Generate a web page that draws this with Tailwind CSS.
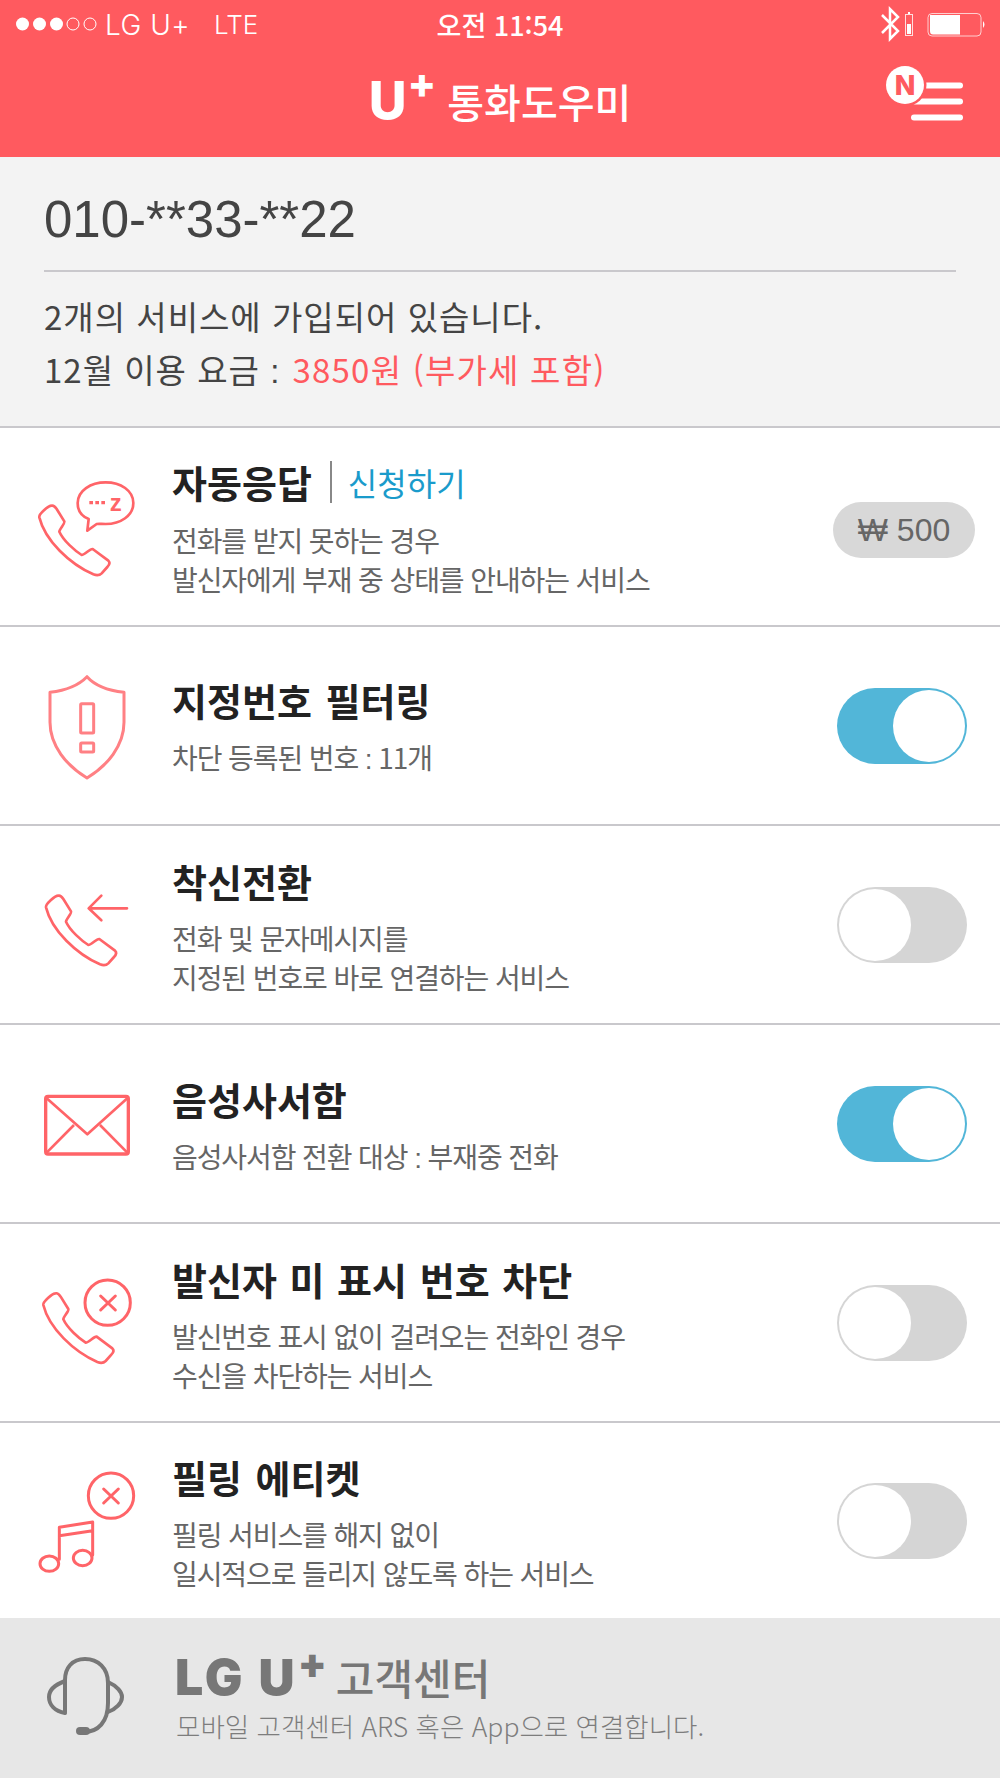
<!DOCTYPE html>
<html lang="ko">
<head>
<meta charset="utf-8">
<script src="https://cdn.jsdelivr.net/npm/@tailwindcss/browser@4"></script>
<title>U+ 통화도우미</title>
</head>
<body class="m-0 bg-white font-['Noto_Sans_CJK_KR','Noto_Sans',sans-serif]">
<svg width="0" height="0" class="absolute"><defs>
<path id="ph" d="M118 265 C116 255 145 230 155 230 C162 228 166 234 170 240 L193 277 C196 283 178 300 178 308 C190 335 225 365 245 378 C255 378 270 358 278 360 L325 395 C332 402 328 408 322 414 L305 433 C298 440 290 440 280 436 C210 405 135 335 118 265 Z"/>
</defs></svg>
<div class="w-[1000px] h-[1778px] overflow-hidden flex flex-col">

<header class="h-[157px] bg-[#ff5a5f] text-white shrink-0 flex flex-col">
  <div class="h-[50px] flex items-center relative">
    <div class="w-[105px] flex items-center shrink-0">
      <svg width="105" height="50" viewBox="0 0 105 50" fill="#fff">
        <circle cx="22.5" cy="24" r="6.5"/><circle cx="39.5" cy="24" r="6.5"/><circle cx="56.5" cy="24" r="6.5"/>
        <circle cx="73" cy="24" r="6" fill="none" stroke="#fff" stroke-width="1"/><circle cx="90" cy="24" r="6" fill="none" stroke="#fff" stroke-width="1"/>
      </svg>
    </div>
    <span class="font-['Inter'] font-light text-[28px] leading-none tracking-[0.5px]">LG U+</span>
    <span class="font-['Inter'] font-light text-[26px] leading-none ml-[24px]">LTE</span>
    <span class="absolute left-0 right-0 text-center text-[27px] leading-[50px] font-medium">오전 11:54</span>
    <svg class="ml-auto relative" width="120" height="50" viewBox="880 0 120 50" fill="none" stroke="#fff">
      <path d="M882 15 L898 31 L890 39 V9 L898 17 L882 33" stroke-width="2.5"/>
      <rect x="905.5" y="14.5" width="7" height="21" stroke-width="1" stroke-opacity=".8"/>
      <rect x="907" y="24" width="4" height="10" fill="#fff" stroke="none"/>
      <rect x="908" y="12" width="2" height="2" fill="#fff" stroke="none"/>
      <rect x="928" y="13.5" width="53" height="22.5" rx="4" stroke-width="1" stroke-opacity=".7"/>
      <path d="M930 15 H960 V34.5 H933 Q930 34.5 930 31 Z" fill="#fff" stroke="none"/>
      <path d="M983 21 Q986 24.500 983 28 Z" fill="#fff" stroke="none"/>
    </svg>
  </div>
  <div class="flex-1 relative flex items-start justify-center pt-[20px]">
    <span class="font-['Inter'] font-extrabold text-[52px] leading-[62px]">U</span>
    <span class="font-['Inter'] font-extrabold text-[42px] leading-[36px] ml-[1px] mr-[11px] -mt-[5px]">+</span>
    <span class="text-[40px] leading-[62px] font-medium">통화도우미</span>
    <svg class="absolute top-0 right-0" width="120" height="107" viewBox="880 50 120 107">
      <g fill="none" stroke="#fff" stroke-width="6" stroke-linecap="round">
        <path d="M915 85.500 H960"/><path d="M915 101.500 H960"/><path d="M914 117.500 H960"/>
      </g>
      <circle cx="905" cy="85" r="21.500" fill="#ff5a5f"/>
      <circle cx="905" cy="85" r="19" fill="#fff"/>
      <text x="905" y="95" text-anchor="middle" font-family="Inter" font-weight="800" font-size="27" fill="#ff5a5f">N</text>
    </svg>
  </div>
</header>

<section class="h-[271px] shrink-0 bg-[#f3f3f3] border-b-2 border-[#c9c8cc] px-[44px] pt-[27px] text-[#444]">
  <div class="h-[88px] border-b-2 border-[#c9c8cc] font-['Liberation_Sans'] text-[51px] leading-[72px]">010-**33-**22</div>
  <p class="mt-[18px] text-[33px] leading-[53px] tracking-[1px]">2개의 서비스에 가입되어 있습니다.</p>
  <p class="text-[33px] leading-[53px] tracking-[1px]">12월 이용 요금 <span class="font-['Liberation_Sans']">:</span> <span class="text-[#ff5a5f] ml-[2px] tracking-[1.2px]">3850원 (부가세 포함)</span></p>
</section>

<main class="flex-1 flex flex-col">
  <article class="h-[199px] shrink-0 flex items-center border-b-2 border-[#c9c8cc]">
    <svg class="w-[172px] h-[197px] shrink-0" viewBox="0 -3 516 591" fill="none" stroke="#ff6468" stroke-width="8" stroke-linejoin="round">
      <use href="#ph"/>
      <path d="M262 305 L266 270 C245 262 233 245 233 222 C233 185 272 160 317 160 C362 160 400 185 400 222 C400 260 362 285 317 285 C305 285 295 284 290 285 Z"/>
      <path d="M268 221 H315" stroke-width="10" stroke-dasharray="11 7"/>
      <text x="347" y="247" text-anchor="middle" font-family="Liberation Sans" font-weight="700" font-size="72" fill="#ff6468" stroke="none">z</text>
    </svg>
    <div class="flex-1 min-w-0 pt-[6px]">
      <div class="flex items-center h-[44px]">
        <h2 class="text-[38px] leading-[44px] font-bold text-[#222]">자동응답</h2>
        <span class="w-[2px] h-[42px] bg-[#888] mx-[18px]"></span>
        <span class="text-[32px] leading-[44px] text-[#1a9bcb] -ml-[2px]">신청하기</span>
      </div>
      <p class="mt-[17px] text-[28px] leading-[39px] text-[#666] tracking-[-1.1px]">전화를 받지 못하는 경우<br>발신자에게 부재 중 상태를 안내하는 서비스</p>
    </div>
    <span class="mr-[25px] mt-[6px] w-[142px] h-[56px] rounded-full bg-[#d8d8d8] flex items-center justify-center font-['Liberation_Sans'] text-[32px] text-[#666]">₩ 500</span>
  </article>

  <article class="h-[199px] shrink-0 flex items-center border-b-2 border-[#c9c8cc]">
    <svg class="w-[172px] h-[197px] shrink-0" viewBox="0 594 516 591" fill="none" stroke="#ff8084" stroke-width="9" stroke-linejoin="round">
      <path d="M261 743 C235 770 190 785 150 790 V880 C150 950 200 1010 261 1047 C322 1010 372 950 372 880 V790 C330 785 285 770 261 743 Z"/>
      <rect x="242" y="824" width="39" height="88" rx="3"/>
      <rect x="242" y="942" width="39" height="27" rx="3"/>
    </svg>
    <div class="flex-1 min-w-0 pt-[5px]">
      <h2 class="h-[44px] text-[38px] leading-[44px] font-bold text-[#222] [word-spacing:3px]">지정번호 필터링</h2>
      <p class="mt-[16px] text-[28px] leading-[39px] text-[#666] tracking-[-1.1px]">차단 등록된 번호 <span class="font-['Liberation_Sans']">:</span> 11개</p>
    </div>
    <div class="mr-[33px] w-[130px] h-[76px] rounded-full bg-[#52b6d8] p-[2px] flex justify-end"><span class="w-[72px] h-[72px] rounded-full bg-white"></span></div>
  </article>

  <article class="h-[199px] shrink-0 flex items-center border-b-2 border-[#c9c8cc]">
    <svg class="w-[172px] h-[197px] shrink-0" viewBox="0 -9 516 591" fill="none" stroke="#ff6468" stroke-width="8" stroke-linejoin="round" stroke-linecap="round">
      <use href="#ph" transform="translate(20 -30)"/>
      <path d="M381 238 H268 M304 200 L266 238 L304 274"/>
    </svg>
    <div class="flex-1 min-w-0 pt-[7px]">
      <h2 class="h-[44px] text-[38px] leading-[44px] font-bold text-[#222]">착신전환</h2>
      <p class="mt-[16px] text-[28px] leading-[39px] text-[#666] tracking-[-1.1px]">전화 및 문자메시지를<br>지정된 번호로 바로 연결하는 서비스</p>
    </div>
    <div class="mr-[33px] w-[130px] h-[76px] rounded-full bg-[#d5d5d5] p-[2px] flex"><span class="w-[72px] h-[72px] rounded-full bg-white"></span></div>
  </article>

  <article class="h-[199px] shrink-0 flex items-center border-b-2 border-[#c9c8cc]">
    <svg class="w-[172px] h-[197px] shrink-0" viewBox="0 585 516 591" fill="none" stroke="#ff6468" stroke-width="10" stroke-linejoin="round">
      <rect x="137" y="799" width="248" height="173" rx="7"/>
      <path d="M140 805 L262 913 L382 805 M140 968 L222 885 M300 885 L382 968" stroke-width="8"/>
    </svg>
    <div class="flex-1 min-w-0 pt-[7px]">
      <h2 class="h-[44px] text-[38px] leading-[44px] font-bold text-[#222]">음성사서함</h2>
      <p class="mt-[16px] text-[28px] leading-[39px] text-[#666] tracking-[-1.1px]">음성사서함 전환 대상 <span class="font-['Liberation_Sans']">:</span> 부재중 전화</p>
    </div>
    <div class="mr-[33px] w-[130px] h-[76px] rounded-full bg-[#52b6d8] p-[2px] flex justify-end"><span class="w-[72px] h-[72px] rounded-full bg-white"></span></div>
  </article>

  <article class="h-[199px] shrink-0 flex items-center border-b-2 border-[#c9c8cc]">
    <svg class="w-[172px] h-[197px] shrink-0" viewBox="0 -18 516 591" fill="none" stroke="#ff6468" stroke-width="8" stroke-linejoin="round" stroke-linecap="round">
      <use href="#ph" transform="translate(12 -40)"/>
      <circle cx="323" cy="218" r="68" stroke-width="9"/>
      <path d="M302 198 L346 240 M346 198 L302 240" stroke-width="9"/>
    </svg>
    <div class="flex-1 min-w-0 pt-[7px]">
      <h2 class="h-[44px] text-[38px] leading-[44px] font-bold text-[#222] [word-spacing:2px]">발신자 미 표시 번호 차단</h2>
      <p class="mt-[16px] text-[28px] leading-[39px] text-[#666] tracking-[-1.1px]">발신번호 표시 없이 걸려오는 전화인 경우<br>수신을 차단하는 서비스</p>
    </div>
    <div class="mr-[33px] w-[130px] h-[76px] rounded-full bg-[#d5d5d5] p-[2px] flex"><span class="w-[72px] h-[72px] rounded-full bg-white"></span></div>
  </article>

  <article class="h-[195px] shrink-0 flex items-center">
    <svg class="w-[172px] h-[195px] shrink-0" viewBox="0 579 516 585" fill="none" stroke="#ff6468" stroke-width="9" stroke-linejoin="round" stroke-linecap="round">
      <circle cx="333" cy="797" r="68"/>
      <path d="M311 777 L355 819 M355 777 L311 819"/>
      <path d="M178 988 V892 L278 876 V975 M178 917 L278 902"/>
      <ellipse cx="148" cy="1001" rx="28" ry="23"/>
      <ellipse cx="248" cy="984" rx="28" ry="23"/>
    </svg>
    <div class="flex-1 min-w-0 pt-[7px]">
      <h2 class="h-[44px] text-[38px] leading-[44px] font-bold text-[#222] [word-spacing:3px]">필링 에티켓</h2>
      <p class="mt-[16px] text-[28px] leading-[39px] text-[#666] tracking-[-1.1px]">필링 서비스를 해지 없이<br>일시적으로 들리지 않도록 하는 서비스</p>
    </div>
    <div class="mr-[33px] w-[130px] h-[76px] rounded-full bg-[#d5d5d5] p-[2px] flex"><span class="w-[72px] h-[72px] rounded-full bg-white"></span></div>
  </article>
</main>

<footer class="h-[160px] shrink-0 bg-[#e7e7e7] flex items-start text-[#777]">
  <svg class="w-[172px] h-[160px] shrink-0" viewBox="0 1618 172 160" fill="none" stroke="#777" stroke-width="4" stroke-linecap="round" stroke-linejoin="round">
    <path d="M65 1712 V1680 C65 1668 72 1659 85 1659 C98 1659 108 1668 108 1683 V1703 C108 1722 98 1732 84 1732"/>
    <path d="M65 1681 C54 1685 49 1691 49 1697 C49 1705 55 1711 65 1713"/>
    <path d="M108 1682 C117 1686 122 1692 122 1697 C122 1703 116 1709 108 1712"/>
    <path d="M80 1731 H86" stroke-width="8"/>
  </svg>
  <div class="pt-[35px] pl-[3px]">
    <div class="flex items-start h-[48px]">
      <span class="font-['Inter'] font-black text-[50px] leading-[48px] tracking-[3px]">LG U</span>
      <span class="font-['Inter'] font-black text-[42px] leading-[30px] -mt-[5px]">+</span>
      <span class="text-[42px] leading-[48px] font-medium ml-[9px]">고객센터</span>
    </div>
    <p class="mt-[7px] ml-[1px] text-[26.5px] leading-[36px] font-light text-[#7d7d7d]">모바일 고객센터 ARS 혹은 App으로 연결합니다.</p>
  </div>
</footer>
</div>
</body>
</html>
